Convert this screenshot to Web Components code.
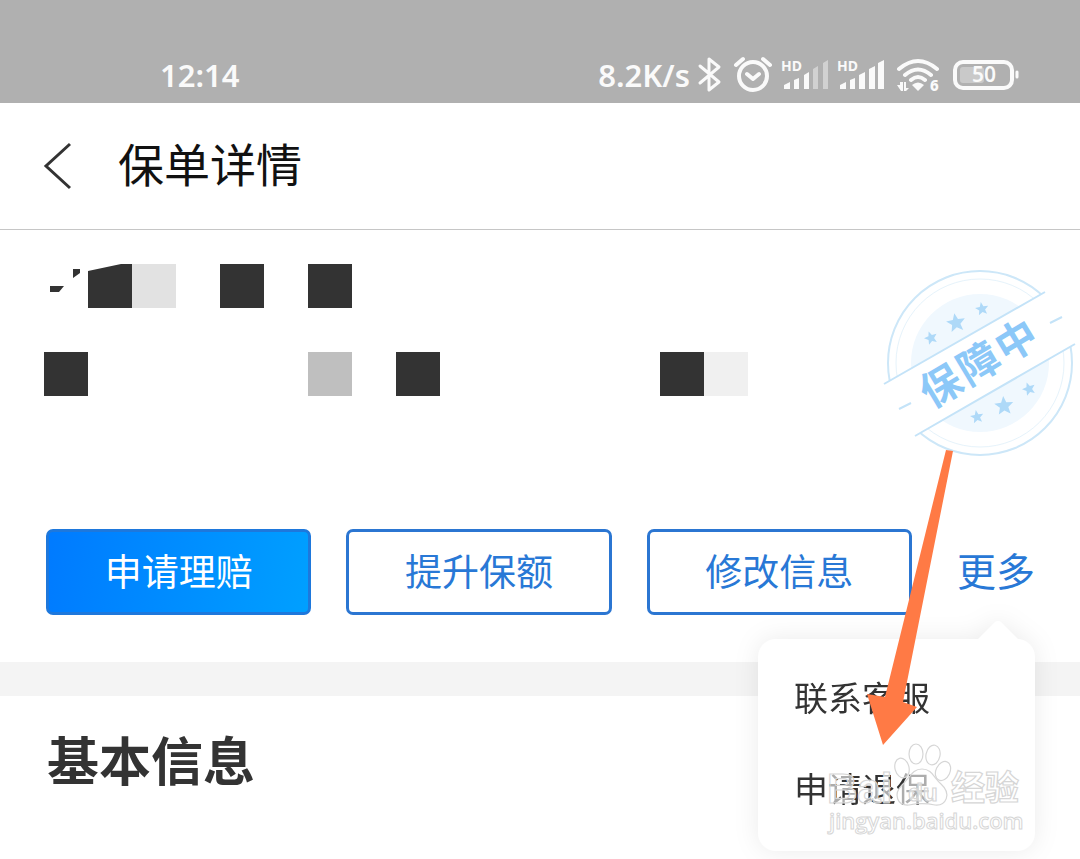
<!DOCTYPE html>
<html lang="zh-CN">
<head>
<meta charset="utf-8">
<meta name="viewport" content="width=device-width, initial-scale=1">
<title>保单详情</title>
<style>
  body { margin: 0; background: #fff; color: #333; font-family: "Noto Sans CJK SC", sans-serif; }
</style>
</head>
<body>
<policy-page></policy-page>
<script>
function define(name, html) {
  const template = document.createElement('template');
  template.innerHTML = html;
  customElements.define(name, class extends HTMLElement {
    constructor() {
      super();
      this.attachShadow({ mode: 'open' }).appendChild(template.content.cloneNode(true));
    }
  });
}

define('status-bar', `
<style>
  :host { display: flex; justify-content: space-between; align-items: flex-end; box-sizing: border-box; height: 103px; padding: 0 60px 8px 160px; background: #b0b0b0; color: #fafafa; font: 600 31px/40px "Noto Sans", sans-serif; }
  .right { display: flex; align-items: center; }
  svg { display: block; }
</style>
<span>12:14</span>
<div class="right">
  <span>8.2K/s</span>
  <svg width="330" height="40" viewBox="690 55 330 40" fill="none" stroke="#fafafa" stroke-linecap="round" stroke-linejoin="round">
    <path d="M700 66 L719 82 L709 90 V59 L719 67 L700 83" stroke-width="3"/>
    <circle cx="753" cy="76" r="14" stroke-width="4"/>
    <path d="M747 74 L753 79 L759 74 M736 65 L743 59 M763 59 L770 65" stroke-width="4"/>
    <g fill="#fafafa" stroke="none">
      <text x="781" y="71" font-family="Noto Sans" font-size="14" font-weight="700">HD</text>
      <path d="M784 89 v-4 l6 -3 v7z M794 89 v-9 l5 -2 v11z M804 89 v-14 l5 -3 v17z"/>
      <path d="M813 89 V69 l5 -3 v23z M823 89 V63 l5 -3 v29z" opacity=".45"/>
      <text x="837" y="71" font-family="Noto Sans" font-size="14" font-weight="700">HD</text>
      <path d="M840 89 v-4 l6 -3 v7z M850 89 v-9 l5 -2 v11z M859 89 v-14 l6 -3 v17z M869 89 V69 l6 -3 v23z M878 89 V63 l6 -3 v29z"/>
      <path d="M912 85 Q918 80 924 85 L918 91z"/>
      <text x="930" y="91" font-family="Noto Sans" font-size="15" font-weight="800">6</text>
      <path d="M897 85 h3 v-3 h3 v9h-2z M904 82 h2 v6 h3 l-3 3h-2z"/>
    </g>
    <path d="M899 69 Q918 53 937 69 M905 75 Q918 64 931 75 M911 80 Q918 74 925 80" stroke-width="4"/>
    <rect x="955" y="62" width="57" height="26" rx="8" stroke-width="4"/>
    <path d="M1017 72 v5" stroke-width="3"/>
    <rect x="960" y="67" width="24" height="16" rx="3" fill="#fafafa" stroke="none" opacity=".35"/>
    <text x="984" y="82" text-anchor="middle" font-family="Noto Sans" font-size="21" font-weight="600" fill="#fafafa" stroke="none">50</text>
  </svg>
</div>`);

define('nav-bar', `
<style>
  :host { display: flex; align-items: center; gap: 40px; box-sizing: border-box; height: 127px; padding: 0 38px; border-bottom: 1px solid #c6c6c6; color: #111; }
  button { display: block; padding: 0; border: 0; background: none; }
  svg { display: block; }
  h1 { margin: 0; padding-bottom: 8px; font-size: 46px; font-weight: 400; line-height: 60px; }
</style>
<button type="button" aria-label="返回">
  <svg width="40" height="52" viewBox="0 0 40 52" fill="none" stroke="#333" stroke-width="3"><path d="M32 4 L8 26 L32 48"/></svg>
</button>
<h1><slot></slot></h1>`);

define('policy-stamp', `
<style>
  :host { display: block; width: 210px; height: 210px; }
  svg { display: block; }
</style>
<svg width="210" height="210" viewBox="0 0 210 210" fill="none">
  <defs><path id="star" d="M0 -10 L2.6 -3.5 L9.5 -3.1 L4.2 1.4 L5.9 8.1 L0 4.4 L-5.9 8.1 L-4.2 1.4 L-9.5 -3.1 L-2.6 -3.5Z"/></defs>
  <circle cx="110" cy="103" r="92" stroke="#cde7f8" stroke-width="2"/>
  <circle cx="110" cy="103" r="84" stroke="#e6f3fb"/>
  <circle cx="110" cy="103" r="69" fill="#f0f8fe"/>
  <path d="M0 132 L14 124 L175 32 L210 12 V81 L205 84 L45 176 L20 190Z" fill="#fff"/>
  <path d="M14 124 L175 32 M45 176 L205 84 M29 149 L41 143 M180 63 L192 57" stroke="#c4e3f8" stroke-width="2"/>
  <g fill="#aed9f8">
    <use href="#star" transform="translate(61 78) scale(.7) rotate(-20)"/>
    <use href="#star" transform="translate(86 63) rotate(-10)"/>
    <use href="#star" transform="translate(112 49) scale(.7) rotate(-10)"/>
    <use href="#star" transform="translate(107 157) scale(.7) rotate(-10)"/>
    <use href="#star" transform="translate(134 146) rotate(-5)"/>
    <use href="#star" transform="translate(159 129) scale(.7) rotate(-20)"/>
  </g>
  <text x="-44 0 44" y="14" text-anchor="middle" transform="translate(109 104) rotate(-31)" font-family="Noto Sans CJK SC, sans-serif" font-size="41" font-weight="700" fill="#8cc8f8">保障中</text>
</svg>`);

define('policy-summary', `
<style>
  :host { display: flex; justify-content: space-between; align-items: flex-start; padding: 30px 0 0 44px; height: 269px; box-sizing: border-box; }
  svg { display: block; margin-top: 4px; }
</style>
<svg width="704" height="132" viewBox="44 264 704 132" fill="#333" aria-hidden="true">
  <path d="M50 286h14l-5 6h-9z M73 269h7v4l-7 5z M88 271L121 264H132V308H88z M220 264h44v44h-44z M308 264h44v44h-44z M44 352h44v44h-44z M396 352h44v44h-44z M660 352h44v44h-44z"/>
  <path d="M132 264h44v44h-44z" fill="#e2e2e2"/>
  <path d="M308 352h44v44h-44z" fill="#bfbfbf"/>
  <path d="M704 352h44v44h-44z" fill="#f0f0f0"/>
</svg>
<policy-stamp></policy-stamp>`);

define('action-button', `
<style>
  :host { display: block; flex: 1; }
  button { display: block; width: 100%; height: 86px; padding: 0 0 4px; border: 3px solid #2b76d2; border-radius: 7px; background: #fff; color: #2878d6; font: 400 37px/54px "Noto Sans CJK SC", sans-serif; }
  :host([primary]) button { background: linear-gradient(100deg, #007aff, #00a0ff) border-box; border-color: #1e78dc; color: #fff; }
</style>
<button type="button"><slot></slot></button>`);

define('more-menu', `
<style>
  :host { display: block; position: relative; margin-left: 10px; }
  .more { display: block; height: 86px; padding: 0 0 6px; border: 0; background: none; color: #2878d6; font: 400 39px/54px "Noto Sans CJK SC", sans-serif; }
  .menu { position: absolute; z-index: 1; top: 110px; right: 0; box-sizing: border-box; width: 277px; padding: 12px 0 18px; border-radius: 18px; background: #fff; filter: drop-shadow(0 0 12px rgba(0,0,0,.08)); }
  .caret { position: absolute; top: -19px; right: 16px; }
  ::slotted(button) { display: block; width: 100%; height: 91px; padding: 0 36px; border: 0; background: none; color: #333; font: 400 34px/50px "Noto Sans CJK SC", sans-serif; text-align: left; }
</style>
<button class="more" type="button" aria-expanded="true">更多</button>
<div class="menu">
  <svg class="caret" width="42" height="20" viewBox="0 0 42 20"><path d="M0 20 L18 2 Q21 0 24 2 L42 20Z" fill="#fff"/></svg>
  <slot></slot>
</div>`);

define('action-row', `
<style>
  :host { display: flex; gap: 35px; padding: 30px 45px 47px 46px; }
</style>
<slot></slot>`);

define('info-section', `
<style>
  :host { display: block; border-top: 34px solid #f4f4f4; padding: 27px 47px; }
  h2 { margin: 0; font-size: 52px; font-weight: 700; line-height: 72px; }
</style>
<h2><slot></slot></h2>`);

define('pointer-arrow', `
<style>
  :host { position: absolute; z-index: 2; top: 450px; right: 163px; pointer-events: none; }
  svg { display: block; }
</style>
<svg width="50" height="296" viewBox="867 450 50 296" overflow="visible" aria-hidden="true"><path d="M946 450 L953 451 L903 702 L917 707 L883 745 L867 694 L885 697Z" fill="#ff7a45"/></svg>`);

define('site-watermark', `
<style>
  :host { position: absolute; z-index: 3; top: 735px; right: 45px; pointer-events: none; }
  svg { display: block; }
</style>
<svg width="220" height="110" viewBox="815 735 220 110" fill="#fff" fill-opacity=".6" stroke="#d6d6d6" stroke-width="1.2" font-family="Noto Sans CJK SC, sans-serif">
  <text x="827" y="803" font-family="Liberation Sans" font-size="42" font-weight="700">Bai</text>
  <ellipse cx="902" cy="768" rx="7" ry="10" transform="rotate(-15 902 768)"/>
  <ellipse cx="916" cy="754" rx="7" ry="10"/>
  <ellipse cx="933" cy="755" rx="7" ry="10" transform="rotate(12 933 755)"/>
  <ellipse cx="943" cy="771" rx="7" ry="10" transform="rotate(25 943 771)"/>
  <path d="M922 769 C932 769 934 778 941 784 C952 794 946 806 935 805 C926 803 918 803 909 805 C897 806 893 794 902 785 C910 778 912 769 922 769Z"/>
  <text x="923" y="801" text-anchor="middle" font-family="Liberation Sans" font-size="24" font-weight="700">du</text>
  <text x="951" y="800" font-size="34" font-weight="700">经验</text>
  <text x="829" y="829" font-family="Open Sans" font-size="22" font-weight="600" stroke-width="1">jingyan.baidu.com</text>
</svg>`);

define('policy-page', `
<style>
  :host { display: block; position: relative; overflow: hidden; min-height: 100vh; }
</style>
<status-bar></status-bar>
<nav-bar>保单详情</nav-bar>
<policy-summary></policy-summary>
<action-row>
  <action-button primary>申请理赔</action-button>
  <action-button>提升保额</action-button>
  <action-button>修改信息</action-button>
  <more-menu>
    <button type="button">联系客服</button>
    <button type="button">申请退保</button>
  </more-menu>
</action-row>
<info-section>基本信息</info-section>
<pointer-arrow></pointer-arrow>
<site-watermark></site-watermark>`);
</script>
</body>
</html>
